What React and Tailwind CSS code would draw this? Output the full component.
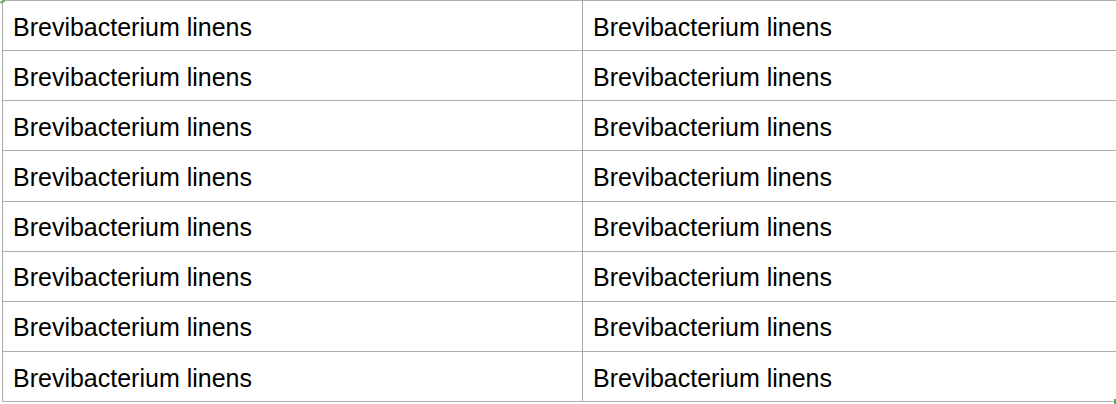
import React from "react";

const rows = Array.from({ length: 8 }, () => [
  "Brevibacterium linens",
  "Brevibacterium linens",
]);

function App() {
  return (
    <div className="relative w-[1116px] h-[404px] overflow-hidden bg-white">
      <div className="ml-[2px] w-[1200px] border-t border-l border-[#acacac]">
        {rows.map((row, i) => (
          <div key={i} className="flex h-[50.15px] border-b border-[#acacac]">
            <div className="w-[580px] shrink-0 border-r border-[#acacac] pl-[10px] pt-[3px] flex items-center text-[25px] leading-none text-black font-['Liberation_Sans',Arial,sans-serif]">
              {row[0]}
            </div>
            <div className="flex-1 pl-[10px] pt-[3px] flex items-center text-[25px] leading-none text-black font-['Liberation_Sans',Arial,sans-serif]">
              {row[1]}
            </div>
          </div>
        ))}
      </div>
      <div className="absolute left-0 top-0 w-[5px] h-[2px] bg-[#4caf50] rotate-[-30deg] origin-top-left translate-y-[2px]" />
      <div className="absolute right-0 bottom-0 w-[2px] h-[5px] bg-[#4caf50]" />
    </div>
  );
}

export default App;
